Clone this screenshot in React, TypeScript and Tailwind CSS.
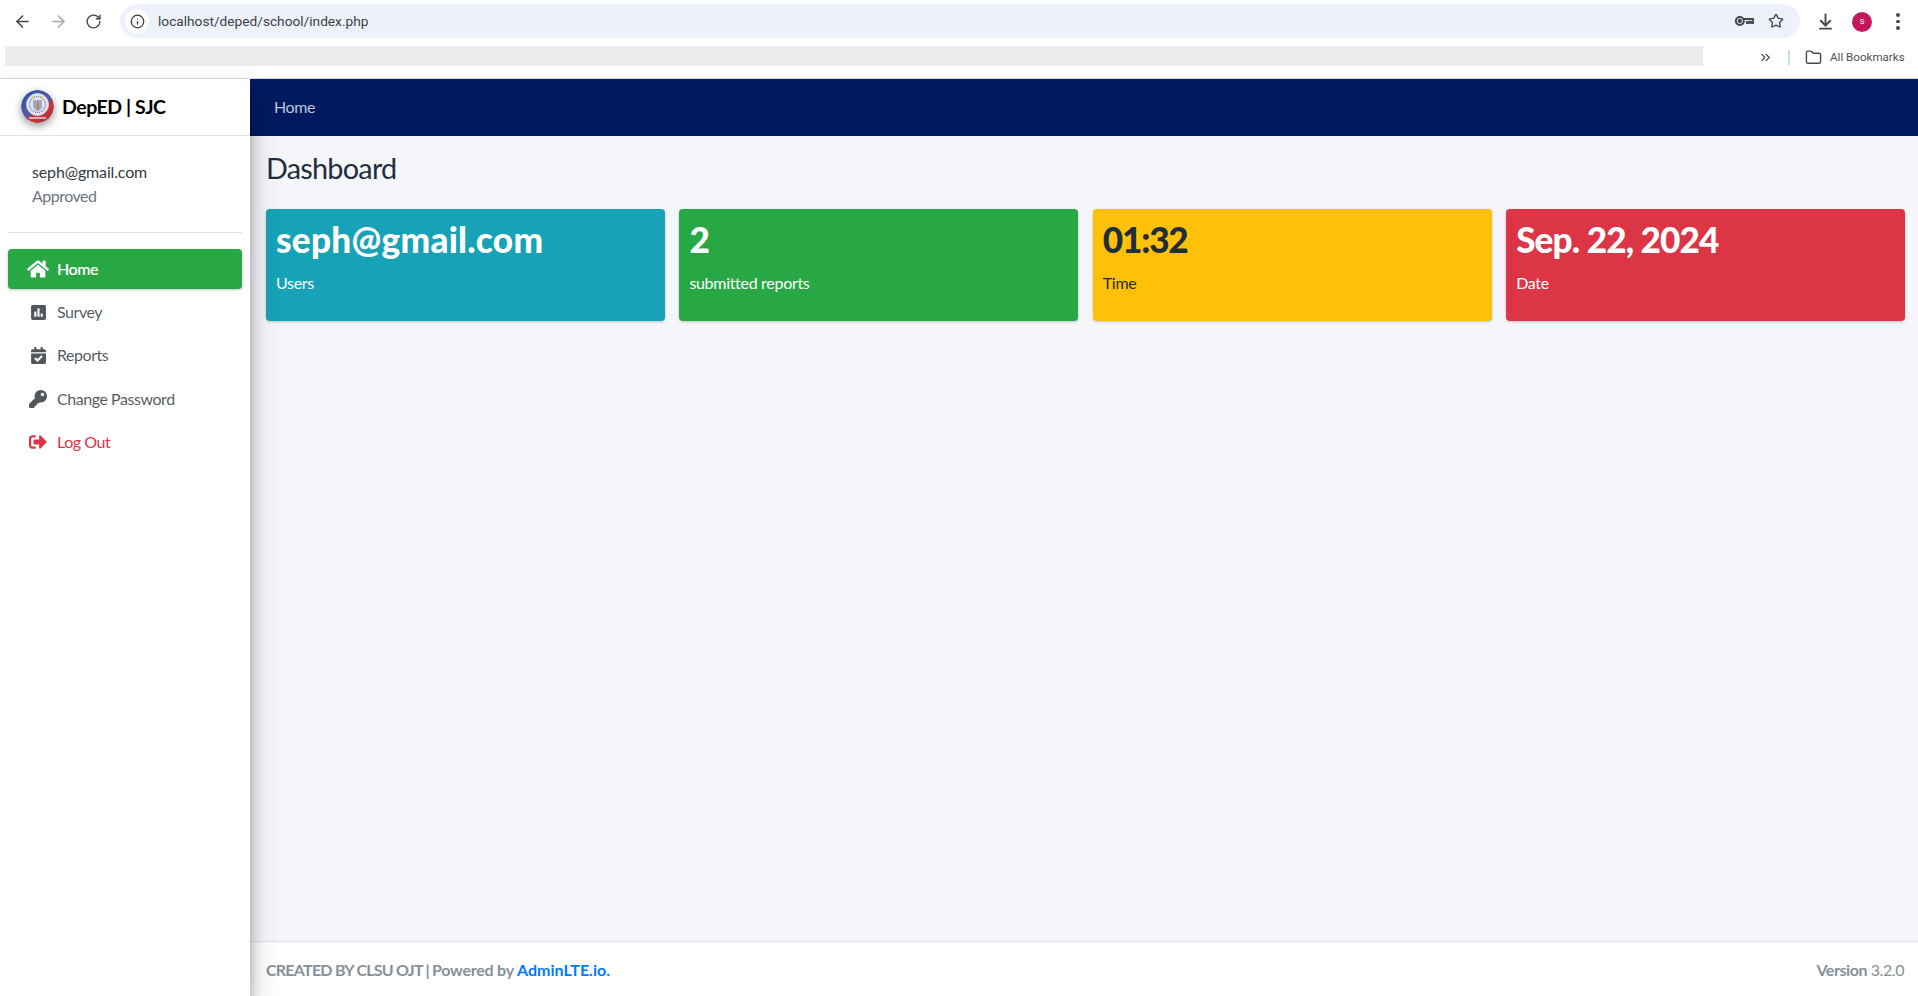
import { ArrowLeft, ArrowRight, RotateCw, Info, Star, ArrowDownToLine, ChevronsRight, Folder } from 'lucide-react'
import { FaHome, FaPoll, FaCalendarCheck, FaKey, FaSignOutAlt } from 'react-icons/fa'
import type { ReactNode } from 'react'

const sans = "font-['Source_Sans_Pro','Lato','Noto_Sans',sans-serif]"

function KeyIcon() {
  return (
    <svg width="20" height="20" viewBox="0 0 24 24" fill="none" stroke="#45494f" strokeWidth="2.4">
      <circle cx="7" cy="12" r="4.8" />
      <circle cx="7" cy="12" r="1.4" fill="#45494f" />
      <path d="M11.8 9.5H23v5h-2.5v-1.5h-2.5v1.5h-2.5v-2.5" strokeLinejoin="round" />
    </svg>
  )
}

function Logo() {
  return (
    <div className="relative w-[33px] h-[33px] mb-[2px] rounded-full shadow-[0_3px_8px_rgba(0,0,0,0.4)] overflow-hidden shrink-0">
      <svg width="33" height="33" viewBox="0 0 33 33">
        <defs>
          <linearGradient id="seal" x1="0.2" y1="0.1" x2="0.8" y2="0.9">
            <stop offset="0" stopColor="#2f55a8" />
            <stop offset="0.55" stopColor="#5a5a9c" />
            <stop offset="0.68" stopColor="#c0363f" />
            <stop offset="1" stopColor="#b8323c" />
          </linearGradient>
        </defs>
        <circle cx="16.5" cy="16.5" r="16.5" fill="url(#seal)" />
        <circle cx="16.5" cy="14.5" r="11" fill="#e4e4ee" stroke="#d9d9e6" strokeWidth="0.8" />
        <circle cx="16.5" cy="14.5" r="8" fill="none" stroke="#6a72a8" strokeWidth="1.2" strokeDasharray="1 1" />
        <path d="M12 10h9v6c0 3-2.5 4.5-4.5 5.5-2-1-4.5-2.5-4.5-5.5z" fill="#a4a9cc" />
        <path d="M15.5 12h2l1 7h-3z" fill="#a58e4c" />
        <circle cx="12" cy="7.5" r="1.1" fill="#e4c342" />
        <circle cx="21" cy="7.5" r="1.1" fill="#e4c342" />
        <rect x="8" y="27" width="17" height="2" fill="#e9c9c9" opacity="0.8" />
      </svg>
    </div>
  )
}

function NavItem({ icon, label, active, danger }: { icon: ReactNode; label: string; active?: boolean; danger?: boolean }) {
  const color = active ? 'bg-[#28a745] text-white shadow-[0_1px_3px_rgba(0,0,0,0.25)] font-semibold' : danger ? 'text-[#dc3545]' : 'text-[#343a40]/85'
  return (
    <div className={`flex items-center h-10 mb-[3.2px] rounded pl-[18px] ${color}`}>
      <span className="w-[24px] flex justify-center">{icon}</span>
      <span className="ml-[7px] text-[16px] tracking-[-0.45px]">{label}</span>
    </div>
  )
}

function StatCard({ value, label, bg, dark, track }: { value: string; label: string; bg: string; dark?: boolean; track: string }) {
  return (
    <div className={`${bg} ${dark ? 'text-[#1f2d3d]' : 'text-white'} flex-1 h-[112px] rounded shadow-[0_1px_3px_rgba(0,0,0,0.2)] p-[10px]`}>
      <div className={`text-[35.2px] font-black leading-[42px] mt-[-1px] whitespace-nowrap ${track}`}>{value}</div>
      <div className="text-[16px] leading-[24px] mt-[11px] tracking-[-0.3px]">{label}</div>
    </div>
  )
}

export default function App() {
  return (
    <div className={`h-[996px] w-[1918px] overflow-hidden flex flex-col bg-white ${sans}`}>
      {/* browser chrome */}
      <div className="h-[79px] shrink-0 border-b border-[#dadce0] font-['Roboto',sans-serif]">
        <div className="h-[42px] flex items-center pt-[1px]">
          <div className="w-[118px] flex items-center pl-[13px] gap-[17px] text-[#474747]">
            <ArrowLeft size={19} />
            <ArrowRight size={19} className="text-[#aaaaaa]" />
            <RotateCw size={17} />
          </div>
          <div className="w-[1680px] h-[34px] mt-[-1px] ml-[2px] rounded-full bg-[#edf2fa] flex items-center pl-[5px] pr-[16px]">
            <span className="w-[24px] h-[24px] rounded-full bg-white flex items-center justify-center text-[#3c3c3c]">
              <Info size={15} />
            </span>
            <span className="ml-[9px] text-[13.7px] text-[#3c3f43]">localhost/deped/school/index.php</span>
            <span className="ml-auto flex items-center gap-[14px]">
              <KeyIcon />
              <Star size={16} className="text-[#45494f]" />
            </span>
          </div>
          <div className="flex items-center ml-[16px] gap-[17px] text-[#45494f]">
            <ArrowDownToLine size={19} strokeWidth={2.4} />
            <span className="w-5 h-5 rounded-full bg-[#c2185b] text-white text-[9px] flex items-center justify-center">s</span>
            <span className="flex flex-col gap-[3px] ml-[7px]">
              <i className="block w-[3.5px] h-[3.5px] rounded-full bg-[#45494f]" />
              <i className="block w-[3.5px] h-[3.5px] rounded-full bg-[#45494f]" />
              <i className="block w-[3.5px] h-[3.5px] rounded-full bg-[#45494f]" />
            </span>
          </div>
        </div>
        <div className="h-[30px] flex items-center">
          <div className="ml-[5px] w-[1698px] h-[20px] mt-[-2px] bg-[#ececec]" />
          <ChevronsRight size={15} className="ml-[55px] text-[#45494f]" />
          <span className="ml-[15px] w-[2px] h-[15px] bg-[#c9dcf5]" />
          <Folder size={17} className="ml-[15px] text-[#45494f]" />
          <span className="ml-[8px] pt-[2px] text-[11.6px] text-[#4a4f55]">All Bookmarks</span>
        </div>
      </div>

      <div className="flex-1 flex min-h-0">
        {/* sidebar */}
        <aside className="w-[250px] shrink-0 flex flex-col z-10 bg-white shadow-[0_14px_28px_rgba(0,0,0,0.25),0_10px_10px_rgba(0,0,0,0.22)]">
          <div className="h-[57px] shrink-0 border-b border-[#dee2e6] flex items-center pl-[21px]">
            <Logo />
            <span className="ml-[8px] text-[19.5px] font-bold text-black tracking-[-0.45px]">DepED | SJC</span>
          </div>
          <div className="px-[8px]">
            <div className="pl-[24px] pt-[24px] h-[97px] border-b border-[#dee2e6] text-[16px] leading-[24px]">
              <div className="text-[#343a40] tracking-[-0.15px]">seph@gmail.com</div>
              <div className="text-[#6c757d] tracking-[-0.5px]">Approved</div>
            </div>
            <nav className="mt-[16px]">
              <NavItem icon={<FaHome size={22} />} label="Home" active />
              <NavItem icon={<FaPoll size={17} />} label="Survey" />
              <NavItem icon={<FaCalendarCheck size={17} />} label="Reports" />
              <NavItem icon={<FaKey size={18} />} label="Change Password" />
              <NavItem icon={<FaSignOutAlt size={18} />} label="Log Out" danger />
            </nav>
          </div>
        </aside>

        <div className="flex-1 flex flex-col min-w-0">
          <header className="h-[57px] shrink-0 bg-[#001a61] flex items-center pl-[24px] pb-[1px] text-[16px] text-white/75 tracking-[-0.4px]">Home</header>
          <main className="flex-1 bg-[#f4f6f9] pl-[16px] pr-[13px]">
            <h1 className="mt-[15px] text-[28.8px] leading-[35px] font-normal text-[#1f2d3d] tracking-[-0.75px]">Dashboard</h1>
            <div className="grid grid-cols-4 gap-[14.5px] mt-[23px]">
              <StatCard value="seph@gmail.com" label="Users" bg="bg-[#17a2b8]" track="tracking-[0.25px]" />
              <StatCard value="2" label="submitted reports" bg="bg-[#28a745]" track="" />
              <StatCard value="01:32" label="Time" bg="bg-[#ffc107]" dark track="tracking-[-1.2px]" />
              <StatCard value="Sep. 22, 2024" label="Date" bg="bg-[#dc3545]" track="tracking-[-0.9px]" />
            </div>
          </main>
          <footer className="h-[55px] shrink-0 bg-white border-t border-[#dee2e6] flex items-center justify-between pl-[16px] pr-[14px] pt-[2px] text-[16px] text-[#869099]">
            <span className="font-bold whitespace-pre">
              <span className="tracking-[-0.75px]">CREATED BY CLSU OJT | </span>
              <span className="tracking-[-0.25px]">Powered by </span>
              <span className="text-[#007bff]">AdminLTE.io.</span>
            </span>
            <span className="tracking-[-0.43px]"><b>Version</b> 3.2.0</span>
          </footer>
        </div>
      </div>
    </div>
  )
}
